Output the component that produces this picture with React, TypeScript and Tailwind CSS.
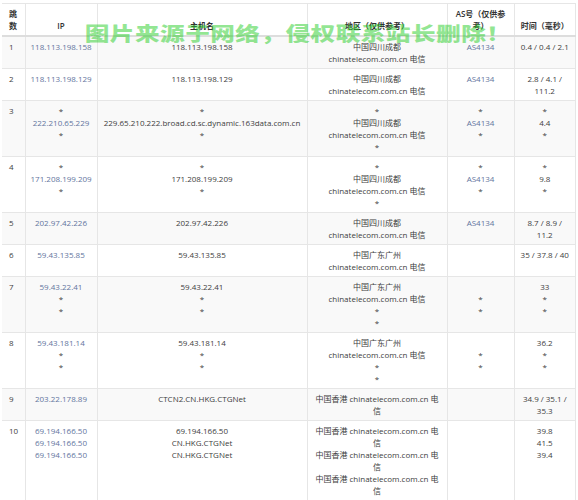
type Cell = string[];

type Hop = {
  hop: string;
  ip: Cell;
  host: Cell;
  region: Cell;
  as: Cell;
  time: Cell;
};

const TEL = "chinatelecom.com.cn 电信";
const HK = "中国香港 chinatelecom.com.cn 电信";

const hops: Hop[] = [
  { hop: "1", ip: ["118.113.198.158"], host: ["118.113.198.158"], region: ["中国四川成都", TEL], as: ["AS4134"], time: ["0.4 / 0.4 / 2.1"] },
  { hop: "2", ip: ["118.113.198.129"], host: ["118.113.198.129"], region: ["中国四川成都", TEL], as: ["AS4134"], time: ["2.8 / 4.1 / 111.2"] },
  {
    hop: "3",
    ip: ["*", "222.210.65.229", "*"],
    host: ["*", "229.65.210.222.broad.cd.sc.dynamic.163data.com.cn", "*"],
    region: ["*", "中国四川成都", TEL, "*"],
    as: ["*", "AS4134", "*"],
    time: ["*", "4.4", "*"],
  },
  {
    hop: "4",
    ip: ["*", "171.208.199.209", "*"],
    host: ["*", "171.208.199.209", "*"],
    region: ["*", "中国四川成都", TEL, "*"],
    as: ["*", "AS4134", "*"],
    time: ["*", "9.8", "*"],
  },
  { hop: "5", ip: ["202.97.42.226"], host: ["202.97.42.226"], region: ["中国四川成都", TEL], as: ["AS4134"], time: ["8.7 / 8.9 / 11.2"] },
  { hop: "6", ip: ["59.43.135.85"], host: ["59.43.135.85"], region: ["中国广东广州", TEL], as: [], time: ["35 / 37.8 / 40"] },
  {
    hop: "7",
    ip: ["59.43.22.41", "*", "*"],
    host: ["59.43.22.41", "*", "*"],
    region: ["中国广东广州", TEL, "*", "*"],
    as: ["\u00a0", "*", "*"],
    time: ["33", "*", "*"],
  },
  {
    hop: "8",
    ip: ["59.43.181.14", "*", "*"],
    host: ["59.43.181.14", "*", "*"],
    region: ["中国广东广州", TEL, "*", "*"],
    as: ["\u00a0", "*", "*"],
    time: ["36.2", "*", "*"],
  },
  { hop: "9", ip: ["203.22.178.89"], host: ["CTCN2.CN.HKG.CTGNet"], region: [HK], as: [], time: ["34.9 / 35.1 / 35.3"] },
  {
    hop: "10",
    ip: ["69.194.166.50", "69.194.166.50", "69.194.166.50"],
    host: ["69.194.166.50", "CN.HKG.CTGNet", "CN.HKG.CTGNet"],
    region: [HK, HK, HK],
    as: [],
    time: ["39.8", "41.5", "39.4"],
  },
];

const Lines = ({ lines, link }: { lines: Cell; link?: boolean }) => (
  <>
    {lines.map((line, i) => (
      <div key={i} className={link && line !== "*" ? "text-[#63759e]" : ""}>
        {line}
      </div>
    ))}
  </>
);

const td = "border-l border-[#e6e6e6] px-[5px] pt-[4px] pb-[3px] align-top text-center";

export default function App() {
  return (
    <div
      className="relative w-[578px] h-[500px] bg-white overflow-hidden pt-[3px]"
      style={{ fontFamily: '"Open Sans", "Noto Sans CJK SC", sans-serif' }}
    >
      <table className="ml-[2px] w-[574px] table-fixed border-collapse border-t border-r border-[#e6e6e6] text-[8px] leading-[12px] text-[#404040]">
        <colgroup>
          <col className="w-[23px]" />
          <col className="w-[72px]" />
          <col className="w-[210px]" />
          <col className="w-[140px]" />
          <col className="w-[67px]" />
          <col />
        </colgroup>
        <thead>
          <tr className="border-b-2 border-[#dddddd] text-[#333] font-semibold h-[32px]">
            <th className="px-[7px] pb-[3px] align-bottom text-left font-semibold">跳数</th>
            <th className="border-l border-[#e6e6e6] px-[5px] pb-[3px] align-bottom font-semibold">IP</th>
            <th className="border-l border-[#e6e6e6] px-[5px] pb-[3px] align-bottom font-semibold">主机名</th>
            <th className="border-l border-[#e6e6e6] px-[5px] pb-[3px] align-bottom font-semibold">地区（仅供参考）</th>
            <th className="border-l border-[#e6e6e6] px-[5px] pb-[3px] align-bottom font-semibold">AS号（仅供参考）</th>
            <th className="border-l border-[#e6e6e6] px-[5px] pb-[3px] align-bottom font-semibold">时间（毫秒）</th>
          </tr>
        </thead>
        <tbody>
          {hops.map((h, i) => (
            <tr key={h.hop} className={`border-b border-[#e6e6e6] ${i % 2 === 0 ? "bg-[#f9f9f9]" : "bg-white"}`}>
              <td className="pl-[7px] pt-[4px] pb-[3px] align-top text-left">{h.hop}</td>
              <td className={td}>
                <Lines lines={h.ip} link />
              </td>
              <td className={`${td} px-[2px]`}>
                <Lines lines={h.host} />
              </td>
              <td className={td}>
                <Lines lines={h.region} />
              </td>
              <td className={td}>
                <Lines lines={h.as} link />
              </td>
              <td className={td}>
                <Lines lines={h.time} />
              </td>
            </tr>
          ))}
        </tbody>
      </table>

      <div className="pointer-events-none absolute left-0 right-0 top-[21px] flex justify-center pl-[18px]">
        <span className="scale-x-[1.3] text-[19px] leading-[26px] font-black tracking-[0.3px] text-[rgba(40,205,40,0.5)]">
          图片来源于网络，侵权联系站长删除！
        </span>
      </div>
    </div>
  );
}
